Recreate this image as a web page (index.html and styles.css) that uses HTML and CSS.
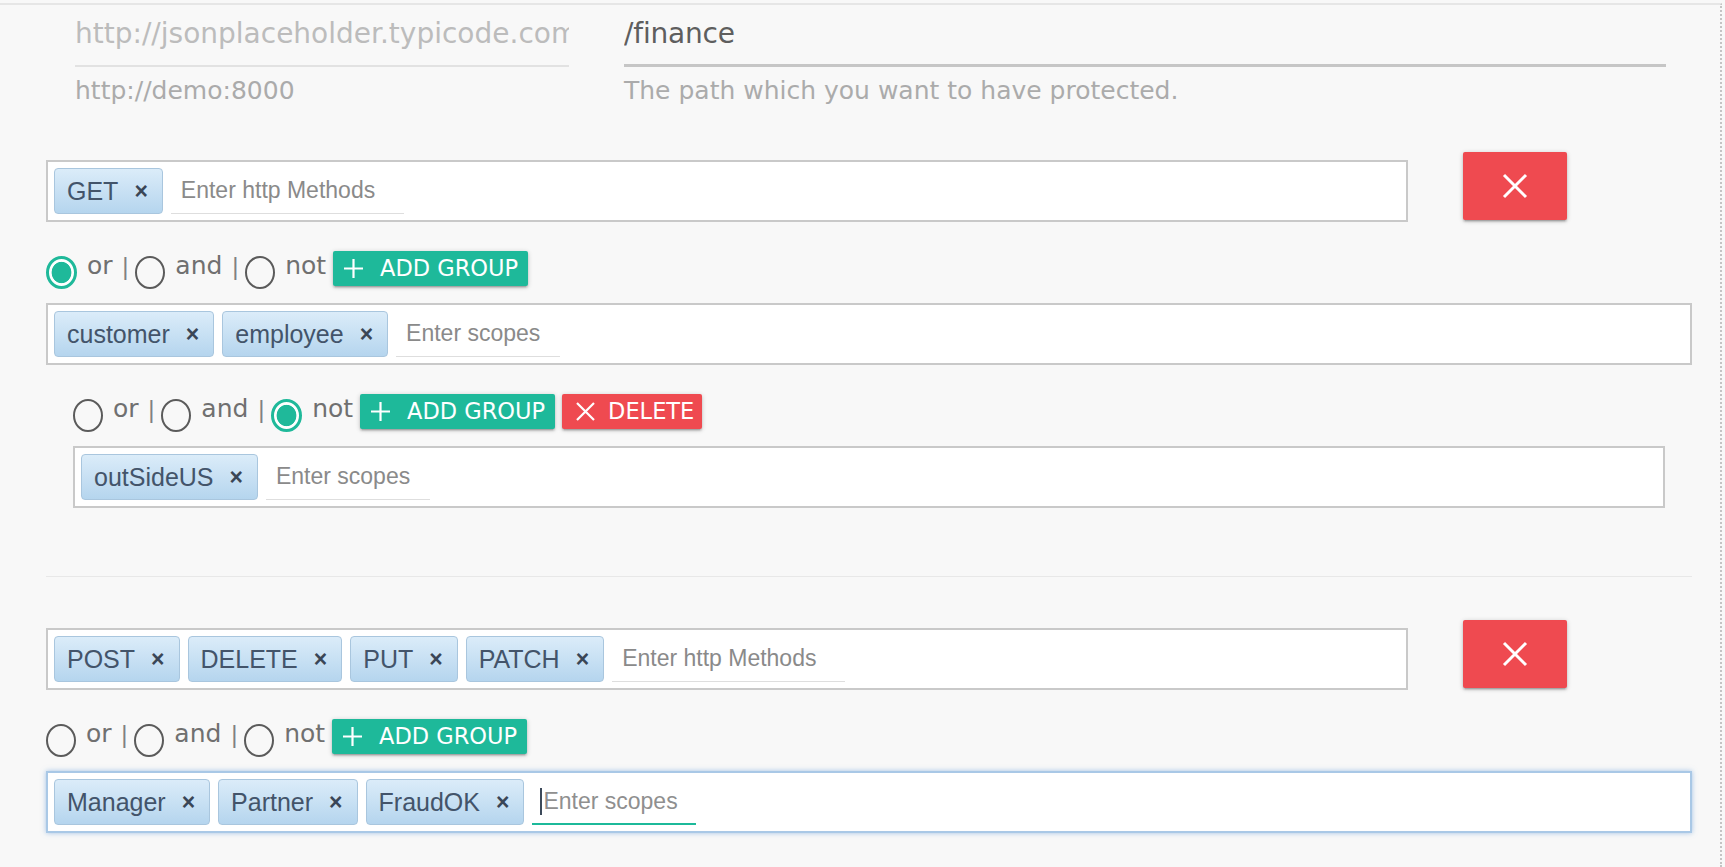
FILE: index.html
```html
<!DOCTYPE html>
<html lang="en">
<head>
<meta charset="utf-8">
<title>Protected path rules</title>
<link rel="stylesheet" href="styles.css">
</head>
<body>
<div class="frame">
  <div class="top-row">
    <div class="field field-base">
      <div class="field-value disabled">http://jsonplaceholder.typicode.com</div>
      <div class="helper">http://demo:8000</div>
    </div>
    <div class="field field-path">
      <div class="field-value">/finance</div>
      <div class="helper">The path which you want to have protected.</div>
    </div>
  </div>

  <section class="rule rule-first">
    <div class="method-row">
      <div class="tag-box methods">
        <span class="chip">GET<span class="chip-x">×</span></span>
        <span class="tag-input methods-input">Enter http Methods</span>
      </div>
      <button class="btn-remove" type="button">
        <svg width="26" height="26" viewBox="0 0 26 26"><path d="M2 2L24 24M24 2L2 24" stroke="#fff" stroke-width="3" fill="none"/></svg>
      </button>
    </div>

    <div class="group">
      <div class="op-row">
        <span class="radio checked"></span><span class="op-label">or</span><span class="sep">|</span>
        <span class="radio"></span><span class="op-label">and</span><span class="sep">|</span>
        <span class="radio"></span><span class="op-label">not</span>
        <button class="btn btn-add" type="button">
          <svg width="19" height="19" viewBox="0 0 19 19"><path d="M9.5 0V19M0 9.5H19" stroke="#fff" stroke-width="2.2" fill="none"/></svg>ADD GROUP</button>
      </div>
      <div class="tag-box scopes">
        <span class="chip">customer<span class="chip-x">×</span></span>
        <span class="chip">employee<span class="chip-x">×</span></span>
        <span class="tag-input scopes-input">Enter scopes</span>
      </div>

      <div class="group nested">
        <div class="op-row">
          <span class="radio"></span><span class="op-label">or</span><span class="sep">|</span>
          <span class="radio"></span><span class="op-label">and</span><span class="sep">|</span>
          <span class="radio checked"></span><span class="op-label">not</span>
          <button class="btn btn-add" type="button">
            <svg width="19" height="19" viewBox="0 0 19 19"><path d="M9.5 0V19M0 9.5H19" stroke="#fff" stroke-width="2.2" fill="none"/></svg>ADD GROUP</button>
          <button class="btn btn-delete" type="button">
            <svg width="19" height="19" viewBox="0 0 19 19"><path d="M1 1L18 18M18 1L1 18" stroke="#fff" stroke-width="2.2" fill="none"/></svg>DELETE</button>
        </div>
        <div class="tag-box scopes-nested">
          <span class="chip">outSideUS<span class="chip-x">×</span></span>
          <span class="tag-input scopes-input">Enter scopes</span>
        </div>
      </div>
    </div>
  </section>

  <hr class="divider">

  <section class="rule rule-second">
    <div class="method-row">
      <div class="tag-box methods">
        <span class="chip">POST<span class="chip-x">×</span></span>
        <span class="chip">DELETE<span class="chip-x">×</span></span>
        <span class="chip">PUT<span class="chip-x">×</span></span>
        <span class="chip">PATCH<span class="chip-x">×</span></span>
        <span class="tag-input methods-input">Enter http Methods</span>
      </div>
      <button class="btn-remove" type="button">
        <svg width="26" height="26" viewBox="0 0 26 26"><path d="M2 2L24 24M24 2L2 24" stroke="#fff" stroke-width="3" fill="none"/></svg>
      </button>
    </div>

    <div class="group">
      <div class="op-row">
        <span class="radio"></span><span class="op-label">or</span><span class="sep">|</span>
        <span class="radio"></span><span class="op-label">and</span><span class="sep">|</span>
        <span class="radio"></span><span class="op-label">not</span>
        <button class="btn btn-add" type="button">
          <svg width="19" height="19" viewBox="0 0 19 19"><path d="M9.5 0V19M0 9.5H19" stroke="#fff" stroke-width="2.2" fill="none"/></svg>ADD GROUP</button>
      </div>
      <div class="tag-box scopes focused">
        <span class="chip">Manager<span class="chip-x">×</span></span>
        <span class="chip">Partner<span class="chip-x">×</span></span>
        <span class="chip">FraudOK<span class="chip-x">×</span></span>
        <span class="tag-input scopes-input active"><span class="caret"></span>Enter scopes</span>
      </div>
    </div>
  </section>
</div>
</body>
</html>
```

FILE: styles.css
```css
html, body {
  margin: 0;
  background: #f8f8f8;
}

body {
  font-family: "DejaVu Sans", "Open Sans", sans-serif;
}

.frame {
  box-sizing: border-box;
  width: 1722px;
  min-height: 864px;
  margin-top: 3px;
  border-top: 2px solid #e6e6e6;
  border-right: 2px dotted #c4c4c4;
  padding-left: 46px;
}

/* top inputs */
.top-row {
  display: flex;
  gap: 55px;
  padding-left: 29px;
}

.field-base { width: 494px; }
.field-path { width: 1042px; }

.field-value {
  font-size: 28px;
  line-height: 30px;
  padding: 14px 0 16px;
  border-bottom: 2px solid #e2e2e2;
  color: #bcbcbc;
  white-space: nowrap;
  overflow: hidden;
}

.field-path .field-value {
  color: #5e5e5e;
  border-bottom: 3px solid #c6c6c6;
  padding-bottom: 15px;
  letter-spacing: -0.2px;
}

.helper {
  font-size: 25px;
  line-height: 30px;
  margin-top: 9px;
  color: #ababab;
}

/* rules */
.rule-first { margin-top: 46px; }
.rule-second { margin-top: 43px; }

.method-row {
  display: flex;
  align-items: flex-start;
}

.tag-box {
  box-sizing: border-box;
  display: flex;
  align-items: center;
  gap: 8px;
  height: 62px;
  padding: 0 6px;
  border: 2px solid #c9c9c9;
  background: #fff;
}

.methods {
  width: 1362px;
  margin-top: 8px;
}

.scopes { width: 1646px; }
.scopes-nested { width: 1592px; }

.chip {
  box-sizing: border-box;
  display: inline-flex;
  align-items: center;
  height: 46px;
  padding: 0 14px 0 12px;
  border: 1px solid #a9c6de;
  border-radius: 4px;
  background: linear-gradient(#dbecf9, #b5d5ee);
  font-family: "Liberation Sans", Arial, sans-serif;
  font-size: 25px;
  color: #43546a;
}

.chip-x {
  margin-left: 16px;
  font-weight: bold;
  font-size: 23px;
  color: #3a4656;
}

.tag-input {
  box-sizing: border-box;
  display: inline-flex;
  align-items: center;
  height: 46px;
  padding-left: 10px;
  border-bottom: 1px solid #dedede;
  font-family: "Liberation Sans", Arial, sans-serif;
  font-size: 23px;
  color: #8a8a8a;
}

.methods-input { width: 233px; }
.scopes-input { width: 164px; }

.tag-input.active {
  border-bottom: 2px solid #1cb99a;
  padding-left: 8px;
  color: #8f8f8f;
}

.caret {
  width: 2px;
  height: 27px;
  margin-right: 1px;
  background: #3d4a5a;
}

.focused {
  border-color: #a9c8e6;
  box-shadow: 0 0 5px rgba(90, 150, 215, 0.55);
}

.btn-remove {
  display: flex;
  align-items: center;
  justify-content: center;
  width: 104px;
  height: 68px;
  margin-left: 55px;
  padding: 0;
  border: none;
  border-radius: 2px;
  background: #ef4a50;
  box-shadow: 0 2px 2px 0 rgba(0,0,0,.14), 0 3px 1px -2px rgba(0,0,0,.12), 0 1px 5px 0 rgba(0,0,0,.2);
}

/* operator rows */
.group .op-row {
  display: flex;
  align-items: center;
  height: 36px;
  margin-top: 28px;
  margin-bottom: 17px;
}

.nested {
  margin-left: 27px;
}

.nested .op-row {
  margin-top: 28px;
  margin-bottom: 17px;
}

.radio {
  box-sizing: border-box;
  width: 30px;
  height: 33px;
  border: 2px solid #5b5b5b;
  border-radius: 50%;
  margin-top: 9px;
}

.radio.checked {
  width: 31px;
  border: 3px solid #1fb99a;
  background: radial-gradient(closest-side, #1fb99a 0, #1fb99a 76%, #fff 82%, #fff 100%);
}

.op-label {
  margin: 0 0 4px 10px;
  font-size: 25px;
  line-height: 26px;
  color: #707070;
}

.sep {
  margin: 0 6px 2px 9px;
  font-size: 23px;
  line-height: 26px;
  color: #808080;
}

.btn {
  box-sizing: border-box;
  display: inline-flex;
  align-items: center;
  height: 35px;
  border: none;
  border-radius: 2px;
  font-family: "DejaVu Sans", sans-serif;
  font-size: 22.5px;
  color: #fff;
  white-space: nowrap;
  box-shadow: 0 2px 2px 0 rgba(0,0,0,.14), 0 3px 1px -2px rgba(0,0,0,.12), 0 1px 5px 0 rgba(0,0,0,.2);
}

.btn-add {
  width: 195px;
  margin-left: 7px;
  padding: 0 0 0 11px;
  gap: 17px;
  background: #1eb99a;
}

.btn-delete {
  width: 140px;
  margin-left: 7px;
  padding: 0 0 0 14px;
  gap: 13px;
  background: #ef4a50;
}

.divider {
  width: 1646px;
  margin: 68px 0 0;
  border: none;
  border-top: 1px solid #e8e8e8;
}

.rule-second .op-row {
  margin-bottom: 17px;
}
```
